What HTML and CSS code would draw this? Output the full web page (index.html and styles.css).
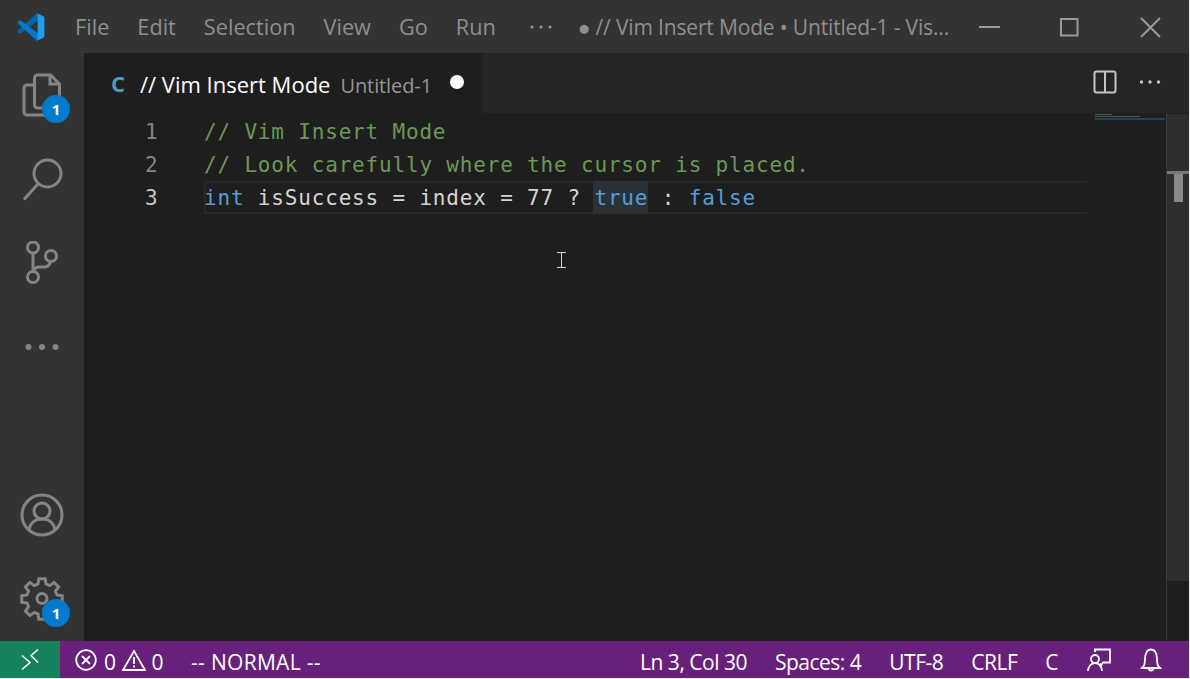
FILE: index.html
```html
<!DOCTYPE html>
<html lang="en">
<head>
<meta charset="utf-8">
<title>Vim Insert Mode</title>
<link rel="stylesheet" href="styles.css">
</head>
<body>
<div class="window">
  <header class="titlebar">
    <svg class="logo" viewBox="0 0 30 30" width="28" height="28">
      <path fill="#0065a9" d="M28.2 3.6 22.3.7c-.7-.3-1.5-.2-2 .4L1 18.7c-.5.5-.5 1.300 0 1.800l1.600 1.400c.4.400 1.100.4 1.600.1L27.500 4.600c.8-.6 1.900-.1 1.900 1v-.1c0-.8-.500-1.500-1.200-1.900z"/>
      <path fill="#007acc" d="m28.200 26.400-5.900 2.900c-.7.300-1.500.2-2-.4L1 11.300c-.5-.5-.5-1.300 0-1.800l1.600-1.400c.4-.4 1.100-.4 1.600-.1l23.300 17.400c.8.600 1.900.100 1.900-1v.1c0 .8-.500 1.500-1.200 1.900z"/>
      <path fill="#1f9cf0" d="M22.300 29.300c-.7.300-1.600.2-2.100-.4.700.7 1.900.2 1.900-.8V1.900c0-1-1.200-1.500-1.900-.8.500-.6 1.400-.7 2.100-.4l5.900 2.900c.7.300 1.200 1 1.200 1.900v19c0 .8-.5 1.500-1.200 1.900z"/>
    </svg>
    <nav class="menu">
      <span>File</span><span>Edit</span><span>Selection</span><span>View</span><span>Go</span><span>Run</span>
      <svg class="menu-more" viewBox="0 0 24 6" width="24" height="6"><circle cx="3" cy="3" r="1.500"/><circle cx="12" cy="3" r="1.500"/><circle cx="21" cy="3" r="1.500"/></svg>
    </nav>
    <div class="wintitle">● // Vim Insert Mode • Untitled-1 - Vis...</div>
    <div class="winctl">
      <svg viewBox="0 0 22 22" width="22" height="22"><path d="M0 11h21" /></svg>
      <svg viewBox="0 0 22 22" width="22" height="22"><rect x="2" y="3" width="16.500" height="16.500"/></svg>
      <svg viewBox="0 0 22 22" width="22" height="22"><path d="M2 2l19 19M21 2 2 21"/></svg>
    </div>
  </header>
  <div class="body">
    <aside class="activity">
      <div class="act-top">
        <div class="act-item">
          <svg viewBox="0 0 40 44" width="40" height="44" class="act-icon"><path d="M12.500 12H5a3 3 0 0 0-3 3v24a3 3 0 0 0 3 3h17a3 3 0 0 0 3-3v-3M15.500 2h13l9 9v21a3 3 0 0 1-3 3h-19a3 3 0 0 1-3-3V5a3 3 0 0 1 3-3z"/><path d="M28 2v9h9"/></svg>
          <span class="badge">1</span>
        </div>
        <div class="act-item">
          <svg viewBox="0 0 44 44" width="44" height="44" class="act-icon"><circle cx="27.500" cy="16.500" r="13.500"/><path d="M18 27 4 42.500"/></svg>
        </div>
        <div class="act-item">
          <svg viewBox="0 0 36 44" width="36" height="44" class="act-icon"><circle cx="9" cy="6.500" r="5.500"/><circle cx="27" cy="15" r="5.500"/><circle cx="9" cy="36" r="5.500"/><path d="M9 12v18M9.500 30c1-3 3-4 6-4h5c3 0 5-2 6-5"/></svg>
        </div>
        <div class="act-item">
          <svg viewBox="0 0 34 8" width="34" height="8" class="act-dots"><circle cx="3.500" cy="4" r="3"/><circle cx="17" cy="4" r="3"/><circle cx="30.500" cy="4" r="3"/></svg>
        </div>
      </div>
      <div class="act-bottom">
        <div class="act-item">
          <svg viewBox="0 0 44 44" width="44" height="44" class="act-icon"><circle cx="22" cy="22" r="20"/><circle cx="22" cy="18" r="8"/><path d="M9 37c1-7 6-11 13-11s12 4 13 11"/></svg>
        </div>
        <div class="act-item">
          <svg viewBox="0 0 44 44" width="44" height="44" class="act-icon"><path d="M18.800 1.750h6.400L26 7l3.750 1.600 4.300-3.200 4.550 4.550-3.200 4.300L37 18l5.250.8v6.400L37 26l-1.600 3.750 3.200 4.300-4.550 4.550-4.300-3.200L26 37l-.8 5.250h-6.400L18 37l-3.750-1.600-4.300 3.200-4.550-4.550 3.200-4.300L7 26l-5.250-.8v-6.400L7 18l1.600-3.750-3.200-4.300L9.950 5.400l4.300 3.200L18 7z"/><circle cx="22" cy="21.500" r="5"/></svg>
          <span class="badge">1</span>
        </div>
      </div>
    </aside>
    <main class="main">
      <div class="tabbar">
        <div class="tab">
          <span class="tab-lang">C</span>
          <span class="tab-name">// Vim Insert Mode</span>
          <span class="tab-desc">Untitled-1</span>
          <span class="tab-dirty"></span>
        </div>
        <div class="tab-actions">
          <svg viewBox="0 0 24 24" width="24" height="24"><rect x="1.500" y="1.500" width="21" height="21" rx="2"/><path d="M12 2v21"/></svg>
          <svg viewBox="0 0 24 6" width="24" height="6" class="more-white"><circle cx="3.500" cy="3" r="1.700"/><circle cx="12" cy="3" r="1.700"/><circle cx="20.500" cy="3" r="1.700"/></svg>
        </div>
      </div>
      <div class="editor">
        <div class="gutter">
          <div class="ln">1</div>
          <div class="ln">2</div>
          <div class="ln ln-active">3</div>
        </div>
        <div class="code">
          <div class="line"><span class="cm">// Vim Insert Mode</span></div>
          <div class="line"><span class="cm">// Look carefully where the cursor is placed.</span></div>
          <div class="line line-active"><span class="kw">int</span> isSuccess = index = 77 ? <span class="kw hl">true</span> : <span class="kw">false</span></div>
        </div>
        <div class="minimap">
          <i class="mm mm-a"></i><i class="mm mm-b"></i><i class="mm mm-c"></i>
        </div>
        <div class="scrollbar"><div class="sb-slider"></div><div class="sb-tick"></div><div class="sb-thumb"></div></div>
        <svg class="ibeam" viewBox="0 0 9 16" width="9" height="16"><path d="M0 .5h9M0 15.500h9M4.500 .5v15"/></svg>
      </div>
    </main>
  </div>
  <footer class="status">
    <div class="remote">
      <svg viewBox="0 0 20 24" width="20" height="24"><path d="M2 7.500l8 7-8 7M18 1.500l-7 6 7 7" /></svg>
    </div>
    <div class="st-left">
      <span class="st-item">
        <svg class="st-error" viewBox="0 0 22 22" width="22" height="22"><circle cx="11" cy="11" r="9.800"/><path d="m7 7 8 8M15 7l-8 8"/></svg>
        <span>0</span>
        <svg viewBox="0 0 24 22" width="24" height="22"><path d="M12 2 23 21H1z"/><path d="M12 8v7M12 16.500v2"/></svg>
        <span>0</span>
      </span>
      <span class="st-mode">-- NORMAL --</span>
    </div>
    <div class="st-right">
      <span>Ln 3, Col 30</span>
      <span>Spaces: 4</span>
      <span>UTF-8</span>
      <span>CRLF</span>
      <span>C</span>
      <svg class="st-feedback" viewBox="0 0 24 24" width="24" height="24"><path d="M8 4V1.500h15v13h-7l-2 3-1-2"/><circle cx="8" cy="11" r="4"/><path d="M1 23c0-4 3-8 7-8s7 4 7 8"/></svg>
      <svg viewBox="0 0 24 24" width="24" height="24"><path d="M3 20c2-2 3-3 3-9 0-5 2-9.500 6-9.500s6 4.500 6 9.500c0 6 1 7 3 9z"/><path d="M9.500 21c1 2 4 2 5 0"/></svg>
    </div>
  </footer>
</div>
</body>
</html>
```
FILE: styles.css
```css
* { box-sizing: border-box; }
html, body { margin: 0; padding: 0; height: 100%; background: #f0f0f0; overflow: hidden; }
.window {
  width: 1189px; height: 678px; display: flex; flex-direction: column;
  background: #1e1e1e; font-family: "Open Sans", "Noto Sans", sans-serif;
}
svg { fill: none; display: block; flex: none; }

.titlebar { height: 53px; flex: none; background: #333333; display: flex; align-items: center; color: #9a9a9a; }
.logo { margin-left: 17px; margin-top: 1px; }
.menu { display: flex; align-items: center; gap: 28px; margin-left: 30px; font-size: 21.7px; color: #8f8f8f; }
.menu-more { fill: #9a9a9a; margin-left: 5px; }
.wintitle { margin-left: 25px; width: 380px; font-size: 21px; letter-spacing: -0.16px; color: #8f8f8f; white-space: nowrap; }
.winctl { display: flex; align-items: center; gap: 58px; margin-left: auto; margin-right: 28px; }
.winctl svg { stroke: #9a9a9a; stroke-width: 2; }

.body { flex: 1; display: flex; min-height: 0; }
.activity { width: 84px; flex: none; background: #333333; display: flex; flex-direction: column; justify-content: space-between; }
.act-item { position: relative; width: 84px; height: 84px; display: flex; align-items: center; justify-content: center; }
.act-icon { stroke: #858585; stroke-width: 3; }
.act-dots { fill: #858585; }
.badge {
  position: absolute; left: 42px; top: 42px; width: 28px; height: 28px; border-radius: 50%;
  background: #007acc; color: #fff; font-size: 15px; font-weight: 700; line-height: 28px; text-align: center;
}

.main { flex: 1; min-width: 0; display: flex; flex-direction: column; }
.tabbar { height: 60px; flex: none; background: #252526; display: flex; align-items: center; justify-content: space-between; }
.tab { width: 398px; height: 60px; background: #1e1e1e; display: flex; align-items: center; padding-left: 27px; }
.tab-lang { color: #519aba; font-weight: 700; font-size: 22px; width: 29px; margin-top: -1px; }
.tab-name { color: #fff; font-size: 22px; margin-top: 1px; }
.tab-desc { color: #969696; font-size: 20px; letter-spacing: -0.1px; margin-left: 10px; margin-top: 5px; }
.tab-dirty { width: 14px; height: 14px; border-radius: 50%; background: #fff; margin-left: 18px; margin-top: -2px; }
.tab-actions { display: flex; align-items: center; gap: 21px; margin-right: 27px; margin-top: -2px; }
.tab-actions svg { stroke: #c5c5c5; stroke-width: 2; }
.tab-actions .more-white { stroke: none; fill: #c5c5c5; }

.editor { position: relative; flex: 1; min-height: 0; display: flex; padding-top: 2px; font-family: "DejaVu Sans Mono", monospace; font-size: 21px; letter-spacing: .82px; }
.gutter { width: 120px; flex: none; }
.ln { height: 33px; line-height: 35px; color: #858585; padding-left: 61px; }
.ln-active { color: #c6c6c6; }
.code { width: 883px; flex: none; color: #d4d4d4; }
.line { height: 33px; line-height: 35px; white-space: pre; }
.line-active { box-shadow: inset 2px 0 #282828, inset 0 2px #282828, inset 0 -2px #282828; }
.cm { color: #6a9955; }
.kw { color: #569cd6; }
.hl { background: #2a3238; display: inline-block; height: 33px; margin-left: -1px; padding-left: 1px; }
.minimap { width: 79px; flex: none; margin-top: -2px; padding: 1px 0 0 8px; display: flex; flex-direction: column; }
.mm { display: block; height: 1px; margin-bottom: 1px; }
.mm-a { width: 17px; background: #4a5f40; }
.mm-b { width: 45px; background: #4a5f40; }
.mm-c { width: 70px; background: #22405f; height: 2px; }
.scrollbar { width: 23px; flex: none; margin-top: -2px; border-left: 1px solid #3a3a3a; position: relative; }
.sb-slider { position: absolute; left: 0; right: 0; top: 1px; height: 467px; background: #2e2e2e; }
.sb-tick { position: absolute; left: 0; right: 0; top: 58px; height: 3px; background: #767676; }
.sb-thumb { position: absolute; left: 7px; width: 9px; top: 61px; height: 28px; background: #8a8a8a; }
.ibeam { position: absolute; left: 473px; top: 139px; stroke: #d4d4d4; stroke-width: 1; }

.status { height: 37px; flex: none; background: #68217a; color: #fff; display: flex; align-items: center; font-size: 21px; letter-spacing: -0.5px; }
.remote { width: 60px; height: 37px; background: #16825d; display: flex; align-items: center; justify-content: center; }
.remote svg { stroke: #fff; stroke-width: 1.500; }
.st-left { display: flex; align-items: center; margin-left: 15px; }
.st-item { display: flex; align-items: center; gap: 6px; }
.st-item span, .st-mode, .st-right span { padding-top: 4px; }
.st-item svg { stroke: #fff; stroke-width: 1.800; }
.st-error { margin-right: 1px; }
.st-mode { margin-left: 28px; letter-spacing: .3px; }
.st-right { display: flex; align-items: center; margin-left: auto; margin-right: 26px; gap: 28px; }
.st-right svg { stroke: #fff; stroke-width: 1.800; }
.st-feedback { margin-left: 1px; }
```
